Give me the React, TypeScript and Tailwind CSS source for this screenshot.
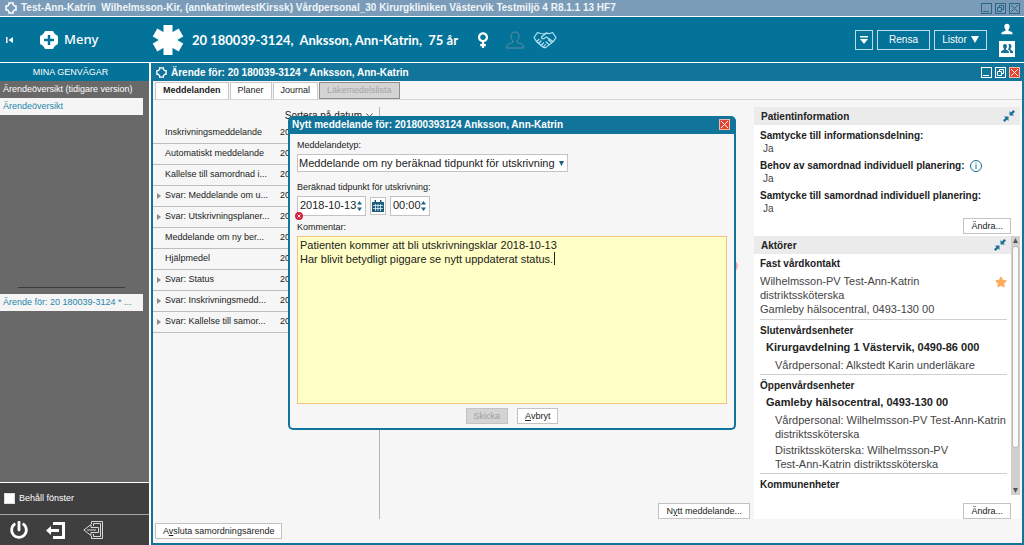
import { useEffect, useRef } from 'react';
import type { ReactNode } from 'react';
import { FaPowerOff, FaStar, FaVenus } from 'react-icons/fa';

interface Message {
  title: string;
  expandable?: boolean;
}

const messages: Message[] = [
  { title: 'Inskrivningsmeddelande' },
  { title: 'Automatiskt meddelande' },
  { title: 'Kallelse till samordnad i...' },
  { title: 'Svar: Meddelande om u...', expandable: true },
  { title: 'Svar: Utskrivningsplaner...', expandable: true },
  { title: 'Meddelande om ny ber...' },
  { title: 'Hjälpmedel' },
  { title: 'Svar: Status', expandable: true },
  { title: 'Svar: Inskrivningsmedd...', expandable: true },
  { title: 'Svar: Kallelse till samor...', expandable: true },
];

const comment =
  'Patienten kommer att bli utskrivningsklar 2018-10-13\nHar blivit betydligt piggare se nytt uppdaterat status.';

function LogoOutline({ className }: { className?: string }) {
  return (
    <svg viewBox="0 0 12 12" className={className} fill="none" stroke="currentColor" strokeWidth="1.5">
      <path d="M4 1h4v1.5l1.500 1.500H11v4H9.500L8 9.500V11H4V9.500L2.500 8H1V4h1.500L4 2.500z" />
    </svg>
  );
}

function MenuLogo() {
  return (
    <svg viewBox="0 0 20 20" className="size-5">
      <path
        fill="#fff"
        d="M7 1h6a2 2 0 0 1 2 2l2 2a2 2 0 0 1 2 2v6a2 2 0 0 1-2 2l-2 2a2 2 0 0 1-2 2H7a2 2 0 0 1-2-2l-2-2a2 2 0 0 1-2-2V7a2 2 0 0 1 2-2l2-2a2 2 0 0 1 2-2z"
      />
      <path stroke="#04739a" strokeWidth="2.500" d="M10 5v10M5 10h10" />
    </svg>
  );
}

function StarOfLife() {
  return (
    <svg viewBox="0 0 32 32" className="size-8" fill="#fff">
      <rect x="11.500" y="1" width="9" height="30" />
      <rect x="11.500" y="1" width="9" height="30" transform="rotate(60 16 16)" />
      <rect x="11.500" y="1" width="9" height="30" transform="rotate(-60 16 16)" />
    </svg>
  );
}

function Person({ className, outline }: { className?: string; outline?: boolean }) {
  return (
    <svg
      viewBox="0 0 18 18"
      className={className}
      fill={outline ? 'none' : 'currentColor'}
      stroke={outline ? 'currentColor' : 'none'}
    >
      <path d="M9 1c2.500 0 4 1.600 4 4 0 2-.6 3.600-1.700 4.600v1.900c0 .6 6 1.300 6 3.500v2H.7v-2c0-2.200 6-2.900 6-3.500V9.600C5.600 8.600 5 7 5 5c0-2.400 1.500-4 4-4z" />
    </svg>
  );
}

function HandshakeIcon() {
  return (
    <svg
      viewBox="0 0 24 18"
      className="ml-[9px] h-[18px] w-6"
      fill="none"
      stroke="#b5e3f5"
      strokeWidth="1.2"
      strokeLinecap="round"
      strokeLinejoin="round"
    >
      <path d="M4.500 1.500L1 6.500l2.500 4 6.500 5.500c1 .8 2 .9 3 .4l7.500-6L23 6.500l-3.500-5-3.500 1.200L13.500 2 11 3 7.500 2.500z" />
      <path d="M13.500 2L8.500 6c-.5 1.500 1.500 2.300 3 1.200L13.500 6l6.500 4.500M3.500 10.500L6 8.500M5.500 12.500l2.500-2.500M8 14.500l2.500-2.500M10.500 16l2-2.500M13 11l3 2.500M15.500 9l3 2.500" />
    </svg>
  );
}

function CollapseIcon() {
  return (
    <svg viewBox="0 0 12 12" className="size-3 text-[#1b7199]" fill="currentColor">
      <path d="M6.500 1v4.500H11L9.600 4.100 12 1.700 10.300 0 7.900 2.400zM5.500 11V6.500H1l1.400 1.400L0 10.300 1.700 12l2.400-2.400z" />
    </svg>
  );
}

function WindowButtons({ danger }: { danger?: boolean }) {
  const tone = danger ? 'border-white text-white' : 'border-[#2d6688] text-[#2d6688]';
  return (
    <div className="flex gap-[3px]">
      <button aria-label="Minimera" className={`flex size-[11px] items-end justify-center border ${tone}`}>
        <svg viewBox="0 0 9 9" className="size-[9px]" stroke="currentColor"><path d="M1 7.500h6" /></svg>
      </button>
      <button aria-label="Återställ" className={`flex size-[11px] items-center justify-center border ${tone}`}>
        <svg viewBox="0 0 9 9" className="size-[9px]" stroke="currentColor" fill="none">
          <path d="M1.500 3.500h4v4h-4zM3.500 3.500v-2h4v4h-2" />
        </svg>
      </button>
      {danger ? <CloseButton /> : (
        <button aria-label="Stäng" className={`flex size-[11px] items-center justify-center border ${tone}`}>
          <svg viewBox="0 0 9 9" className="size-[9px]" stroke="currentColor"><path d="M1 1l7 7M8 1l-7 7" /></svg>
        </button>
      )}
    </div>
  );
}

function CloseButton() {
  return (
    <button aria-label="Stäng" className="flex size-[11px] items-center justify-center border border-[#f3b9ad] bg-[#e5432d] text-white">
      <svg viewBox="0 0 9 9" className="size-[9px]" stroke="currentColor"><path d="M1 1l7 7M8 1l-7 7" /></svg>
    </button>
  );
}

function FlatButton({ children, disabled }: { children: ReactNode; disabled?: boolean }) {
  return (
    <button
      disabled={disabled}
      className="h-4 border border-[#c3c3c3] bg-white px-[7px] text-[9px] leading-[14px] text-[#222] disabled:bg-[#d4d4d4] disabled:text-[#a0a0a0]"
    >
      {children}
    </button>
  );
}

function Spinner({ label }: { label: string }) {
  return (
    <button type="button" aria-label={label} className="pr-[3px] text-[#1b5f80]">
      <svg viewBox="0 0 5 10" className="h-[10px] w-[5px]" fill="currentColor">
        <path d="M0 3.500L2.500 0 5 3.500zM0 6.500h5L2.500 10z" />
      </svg>
    </button>
  );
}

function TopBar() {
  return (
    <header className="bg-[#04739a] text-white">
      <div className="flex h-[17px] items-center justify-between border-b border-white bg-[#7a9cb8] pr-1 pl-[5px]">
        <div className="flex items-center gap-1">
          <LogoOutline className="size-3" />
          <h1 className="whitespace-pre text-[10px] leading-4 font-bold text-[#f0f5f9]">
            {'Test-Ann-Katrin  Wilhelmsson-Kir, (annkatrinwtestKirssk) Vårdpersonal_30 Kirurgkliniken Västervik Testmiljö 4 R8.1.1 13 HF7'}
          </h1>
        </div>
        <WindowButtons />
      </div>
      <div className="flex h-[46px] items-center border-b border-white">
        <button aria-label="Fäll ihop" className="ml-[6px] w-[33px]">
          <svg viewBox="0 0 8 8" className="size-2" fill="#fff"><path d="M0 1h1.500v6H0zM7 1v6L2.500 4z" /></svg>
        </button>
        <button className="flex w-[113px] items-center gap-[5px] font-['Noto_Sans',sans-serif] text-[13px] font-medium">
          <MenuLogo />
          Meny
        </button>
        <StarOfLife />
        <p className="ml-2 pt-[2px] font-['Lato',sans-serif] text-[13px] font-bold whitespace-pre">
          {'20 180039-3124,  Anksson, Ann-Katrin,  75 år'}
        </p>
        <FaVenus className="ml-4 size-[18px]" />
        <Person outline className="ml-[14px] size-[18px] text-[#5f8fa0]" />
        <HandshakeIcon />
        <div className="ml-auto flex items-center gap-1 text-[10px]">
          <button aria-label="Visa mer" className="flex h-5 w-[18px] items-center justify-center border border-[#bcdcea]">
            <svg viewBox="0 0 8 8" className="size-2" fill="#fff"><path d="M0 0h8v1.500H0zM0 3h8L4 8z" /></svg>
          </button>
          <button className="h-5 w-[53px] border border-[#bcdcea]">Rensa</button>
          <button className="flex h-5 w-[53px] items-center justify-center gap-1 border border-[#bcdcea]">
            Listor
            <svg viewBox="0 0 8 7" className="h-[7px] w-2" fill="#fff"><path d="M0 0h8L4 7z" /></svg>
          </button>
        </div>
        <div className="mr-[9px] ml-3 flex flex-col items-center gap-[6px]">
          <Person className="size-3" />
          <button aria-label="Patienter" className="flex size-4 items-center justify-center bg-white text-[#1b7199]">
            <svg viewBox="0 0 12 9" className="h-[9px] w-3" fill="currentColor">
              <path d="M4 0c1.200 0 2 .9 2 2.200 0 1-.3 1.800-.9 2.300v1C5.100 6 8 6.400 8 8v1H0V8c0-1.600 2.900-2 2.900-2.500v-1C2.300 4 2 3.200 2 2.200 2 .9 2.800 0 4 0z" />
              <path d="M8.500 0c1.200 0 2 .9 2 2.200 0 1-.3 1.800-.9 2.300v1c0 .5 2.400.9 2.400 2.500v1H9V7.600C9 6.400 7.300 5.900 7 5.500c.6-.8.900-2 .9-3.300 0-.8-.2-1.500-.5-2z" />
            </svg>
          </button>
        </div>
      </div>
    </header>
  );
}

function Sidebar() {
  return (
    <aside className="flex w-[149px] shrink-0 flex-col bg-[#696969] text-[9px]">
      <h2 className="h-[18px] bg-[#04739a] pr-2 text-center leading-[18px] text-white">MINA GENVÄGAR</h2>
      <nav className="flex flex-col">
        <a href="#tidigare" className="h-[17px] pl-[3px] leading-[17px] whitespace-nowrap text-white">
          Ärendeöversikt (tidigare version)
        </a>
        <a href="#oversikt" className="mr-[6px] h-[17px] bg-[#f5f5f5] pl-[3px] leading-[17px] text-[#2585ab]">
          Ärendeöversikt
        </a>
        <hr className="mt-[172px] mr-6 mb-[6px] ml-[18px] border-[#3c3c3c]" />
        <a href="#arende" className="mr-[6px] h-[17px] bg-[#f5f5f5] pl-[3px] leading-[17px] whitespace-nowrap text-[#2585ab]">
          Ärende för: 20 180039-3124 * ...
        </a>
      </nav>
      <div className="mt-auto border-t border-white bg-[#3f3f3f]">
        <label className="flex h-[31px] items-center gap-1 pl-1 text-white">
          <input type="checkbox" className="size-[11px] appearance-none border border-[#ddd] bg-white" />
          Behåll fönster
        </label>
        <div className="flex h-[31px] items-center gap-[18px] border-t border-[#a5a5a5] pl-[10px] text-white">
          <button aria-label="Avsluta"><FaPowerOff className="size-[18px]" /></button>
          <button aria-label="Logga ut">
            <svg viewBox="0 0 19 17" className="h-[17px] w-[19px]" fill="currentColor">
              <path d="M7 0h12v17H7v-3h9V3H7zM0 8.500L5 4v3h8v3H5v3z" />
            </svg>
          </button>
          <button aria-label="Byt användare">
            <svg viewBox="0 0 20 18" className="h-[18px] w-5" fill="none" stroke="#d8d8d8">
              <path d="M8.500 3V.5h11v17h-11V15M10.500 5V2.500h7v13h-7V13M.8 9L8 3.500v3h7.500v5H8v3zM4 9h9" />
            </svg>
          </button>
        </div>
      </div>
    </aside>
  );
}

function MessageList() {
  return (
    <section className="flex w-[227px] flex-col border-r border-[#b5b5b5] text-[9px] text-[#222]">
      <button className="flex h-4 items-center gap-1 self-end pr-[6px] text-[10px] whitespace-nowrap">
        Sortera på datum
        <svg viewBox="0 0 7 5" className="h-[5px] w-[7px]" fill="none" stroke="#555"><path d="M.5.500l3 3.500 3-3.500" /></svg>
      </button>
      <ul>
        {messages.map((message) => (
          <li key={message.title} className="flex h-[21px] items-center border-b border-[#bdbdbd] pl-1">
            <span className="w-2">
              {message.expandable && (
                <svg viewBox="0 0 4 6" className="h-[6px] w-1" fill="#8a8a8a"><path d="M0 0l4 3-4 3z" /></svg>
              )}
            </span>
            <span className="w-[115px] whitespace-nowrap">{message.title}</span>
            <span>2018</span>
          </li>
        ))}
      </ul>
    </section>
  );
}

function PatientInfo() {
  const label = 'text-[10px] font-bold leading-[13px] text-[#222]';
  const value = 'pl-[3px] text-[10px] leading-[13px] text-[#444]';
  return (
    <section className="flex flex-col">
      <div className="flex h-[18px] items-center justify-between bg-[#ebebeb] pr-[5px] pl-[7px]">
        <h2 className="text-[10px] font-bold text-[#222]">Patientinformation</h2>
        <button aria-label="Fäll ihop patientinformation"><CollapseIcon /></button>
      </div>
      <dl className="flex flex-col gap-1 pt-1 pl-[6px]">
        <div>
          <dt className={label}>Samtycke till informationsdelning:</dt>
          <dd className={value}>Ja</dd>
        </div>
        <div>
          <dt className={`flex items-center gap-[6px] ${label}`}>
            Behov av samordnad individuell planering:
            <svg viewBox="0 0 12 12" className="size-3" fill="none" stroke="#1b7199">
              <circle cx="6" cy="6" r="5.500" />
              <path d="M6 2.500v1M6 4.500v4.500" />
            </svg>
          </dt>
          <dd className={value}>Ja</dd>
        </div>
        <div>
          <dt className={label}>Samtycke till samordnad individuell planering:</dt>
          <dd className={value}>Ja</dd>
        </div>
      </dl>
      <div className="flex justify-end pt-[3px] pr-[9px]">
        <FlatButton>Ändra...</FlatButton>
      </div>
    </section>
  );
}

function Actors() {
  const heading = 'text-[10px] font-bold leading-4 text-[#222]';
  const unit = 'pl-[6px] text-[11px] font-bold leading-4 text-[#222]';
  const staff = 'pl-[15px] text-[11px] leading-[14px] whitespace-nowrap text-[#444]';
  return (
    <section className="mt-[2px] flex flex-1 flex-col">
      <div className="flex flex-1">
        <div className="flex-1">
          <div className="flex h-[18px] items-center justify-between bg-[#ebebeb] pr-[5px] pl-[7px]">
            <h2 className="text-[10px] font-bold text-[#222]">Aktörer</h2>
            <button aria-label="Fäll ihop aktörer"><CollapseIcon /></button>
          </div>
          <div className="mr-1 ml-[6px] divide-y divide-[#cfcfcf]">
            <div className="pt-[2px] pb-[3px]">
              <h3 className={heading}>Fast vårdkontakt</h3>
              <div className="flex items-start justify-between pt-[2px] text-[11px] leading-[14px] text-[#444]">
                <p>
                  Wilhelmsson-PV Test-Ann-Katrin<br />
                  distriktssköterska<br />
                  Gamleby hälsocentral, 0493-130 00
                </p>
                <FaStar className="mt-[2px] size-3 text-[#ffab5c]" />
              </div>
            </div>
            <div className="pt-[3px] pb-[2px]">
              <h3 className={heading}>Slutenvårdsenheter</h3>
              <p className={unit}>Kirurgavdelning 1 Västervik, 0490-86 000</p>
              <p className={`pt-[3px] ${staff}`}>Vårdpersonal: Alkstedt Karin underläkare</p>
            </div>
            <div className="pt-[3px] pb-[2px]">
              <h3 className={heading}>Öppenvårdsenheter</h3>
              <p className={unit}>Gamleby hälsocentral, 0493-130 00</p>
              <p className={`pt-[3px] ${staff}`}>
                Vårdpersonal: Wilhelmsson-PV Test-Ann-Katrin<br />distriktssköterska
              </p>
              <p className={`pt-[2px] ${staff}`}>
                Distriktssköterska: Wilhelmsson-PV<br />Test-Ann-Katrin distriktssköterska
              </p>
            </div>
            <div className="pt-[3px]">
              <h3 className={heading}>Kommunenheter</h3>
            </div>
          </div>
        </div>
        <div className="flex w-[9px] flex-col items-center bg-[#d0d0d0] py-[2px]">
          <svg viewBox="0 0 5 5" className="size-[5px]" fill="#555"><path d="M0 5h5L2.500 0z" /></svg>
          <div className="mt-[3px] mb-10 w-[7px] flex-1 rounded-[3px] border border-[#bbb] bg-[#fafafa]" />
          <svg viewBox="0 0 5 5" className="size-[5px]" fill="#555"><path d="M0 0h5L2.500 5z" /></svg>
        </div>
      </div>
      <div className="flex justify-end pt-2 pr-[9px]">
        <FlatButton>Ändra...</FlatButton>
      </div>
    </section>
  );
}

function CaseWindow() {
  const tab = 'h-[17px] border border-b-0 border-[#c8c8c8] bg-white px-[7px]';
  return (
    <main className="ml-[2px] flex min-w-0 flex-1 flex-col border-2 border-t-0 border-[#11759b] bg-[#f6f6f6]">
      <div className="flex h-[18px] items-center justify-between bg-[#11759b] pr-[2px] pl-[3px] text-white">
        <div className="flex items-center gap-1">
          <LogoOutline className="size-[11px]" />
          <h2 className="text-[10px] font-bold">Ärende för: 20 180039-3124 * Anksson, Ann-Katrin</h2>
        </div>
        <WindowButtons danger />
      </div>
      <div role="tablist" className="flex h-[19px] items-end gap-px border-b border-[#d5d5d5] pl-[2px] text-[9px] text-[#222]">
        <button role="tab" aria-selected="true" className={`${tab} font-bold`}>Meddelanden</button>
        <button role="tab" aria-selected="false" className={tab}>Planer</button>
        <button role="tab" aria-selected="false" className={tab}>Journal</button>
        <button role="tab" aria-selected="false" disabled className="h-[17px] border border-[#8c8c8c] bg-[#d4d4d4] px-[7px] text-[#a5a5a5]">
          Läkemedelslista
        </button>
      </div>
      <div className="flex flex-1 pt-[7px]">
        <MessageList />
        <div className="relative flex flex-1 items-end justify-end pr-1">
          <span className="absolute top-[153px] right-4 size-3 rounded-full bg-[#f4a9b2]" />
          <FlatButton>N<u>y</u>tt meddelande...</FlatButton>
        </div>
        <div className="mr-[2px] flex w-[266px] flex-col bg-white">
          <PatientInfo />
          <Actors />
        </div>
      </div>
      <div className="flex px-[2px] pt-1 pb-1">
        <FlatButton>A<u>v</u>sluta samordningsärende</FlatButton>
      </div>
    </main>
  );
}

function NewMessageDialog() {
  const commentRef = useRef<HTMLTextAreaElement>(null);

  useEffect(() => {
    commentRef.current?.focus();
    commentRef.current?.setSelectionRange(comment.length, comment.length);
  }, []);

  return (
    <div className="fixed inset-0 flex items-center justify-center">
      <div role="dialog" aria-labelledby="dialog-title" className="w-[448px] rounded-[5px] border-2 border-t-0 border-[#11759b] bg-[#f6f6f6]">
        <div className="flex h-[18px] items-center justify-between rounded-t-[3px] bg-[#11759b] pr-1 pl-[2px] text-white">
          <h2 id="dialog-title" className="text-[10px] font-bold">Nytt meddelande för: 201800393124 Anksson, Ann-Katrin</h2>
          <CloseButton />
        </div>
        <form className="flex flex-col px-[7px] pt-1 pb-1 text-[9px] text-[#222]">
          <label htmlFor="type" className="leading-[14px]">Meddelandetyp:</label>
          <div className="relative mt-[2px] w-[271px]">
            <select id="type" className="h-[18px] w-full appearance-none border border-[#c3c3c3] bg-white pl-px text-[11px] leading-4 text-[#222]">
              <option>Meddelande om ny beräknad tidpunkt för utskrivning</option>
            </select>
            <svg viewBox="0 0 5 5" className="pointer-events-none absolute top-[7px] right-1 size-[5px]" fill="#1b5f80">
              <path d="M0 0h5L2.500 5z" />
            </svg>
          </div>
          <label htmlFor="date" className="mt-2 leading-[14px]">Beräknad tidpunkt för utskrivning:</label>
          <div className="mt-[2px] flex items-center gap-1">
            <div className="relative flex h-5 w-[69px] items-center border border-[#c3c3c3] bg-white">
              <input id="date" defaultValue="2018-10-13" className="w-[60px] min-w-0 flex-1 pl-[2px] text-[11px]" />
              <Spinner label="Ändra datum" />
              <svg viewBox="0 0 8 8" className="absolute -bottom-[5px] -left-[3px] size-2">
                <circle cx="4" cy="4" r="4" fill="#d9203a" />
                <path d="M2.500 2.500l3 3M5.500 2.500l-3 3" stroke="#fff" />
              </svg>
            </div>
            <button type="button" aria-label="Kalender" className="flex h-[18px] w-4 items-center justify-center border border-[#c3c3c3] bg-white">
              <svg viewBox="0 0 12 12" className="size-3">
                <path d="M0 2h12v10H0zM2.500 0h1.500v3H2.500zM8 0h1.500v3H8z" fill="#1b5f80" />
                <path d="M1 5.500h10M1 8.500h10M3.500 4v7M6 4v7M8.500 4v7" stroke="#fff" strokeWidth=".7" />
              </svg>
            </button>
            <div className="flex h-5 w-10 items-center border border-[#c3c3c3] bg-white">
              <input aria-label="Klockslag" defaultValue="00:00" className="w-[30px] min-w-0 flex-1 pl-[2px] text-[11px]" />
              <Spinner label="Ändra klockslag" />
            </div>
          </div>
          <label htmlFor="comment" className="mt-1 leading-[14px]">Kommentar:</label>
          <div className="relative mt-[2px] flex">
            <textarea
              id="comment"
              ref={commentRef}
              defaultValue={comment}
              className="h-[168px] w-full resize-none border border-[#f3c583] bg-[#ffffc6] px-[2px] py-px text-[11px] leading-[14px] text-[#222] caret-transparent outline-none"
            />
            <span className="pointer-events-none absolute top-4 left-[257px] h-[13px] w-px bg-[#222]" />
          </div>
          <div className="mt-1 flex justify-center gap-[9px]">
            <FlatButton disabled>Skicka</FlatButton>
            <FlatButton><u>A</u>vbryt</FlatButton>
          </div>
        </form>
      </div>
    </div>
  );
}

export default function App() {
  return (
    <div className="flex min-h-screen flex-col bg-white font-['Liberation_Sans',Arial,sans-serif]">
      <TopBar />
      <div className="flex flex-1">
        <Sidebar />
        <CaseWindow />
      </div>
      <NewMessageDialog />
    </div>
  );
}
